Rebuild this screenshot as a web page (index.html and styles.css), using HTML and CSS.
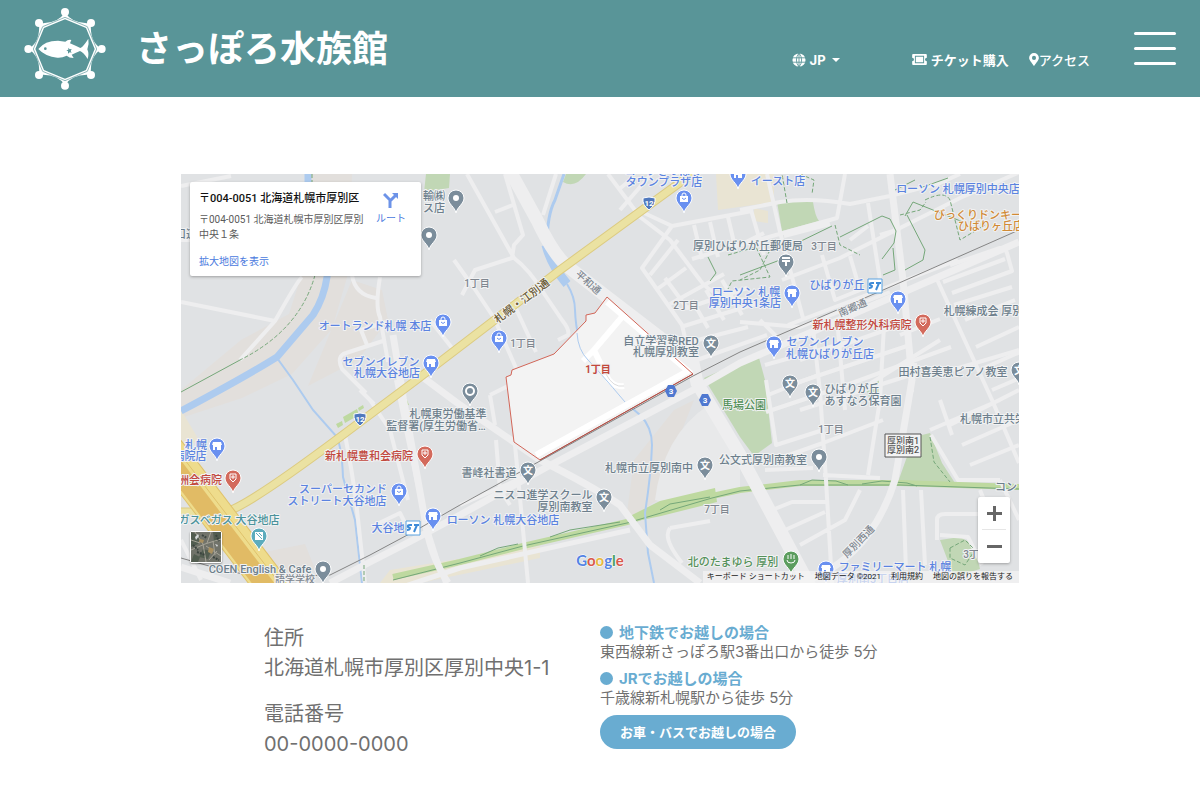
FILE: index.html
```html
<!DOCTYPE html>
<html lang="ja">
<head>
    <meta charset="UTF-8">
    <meta name="viewport" content="width=device-width, initial-scale=1.0">
    <title>アクセス | さっぽろ水族館</title>
    <link rel="stylesheet" href="styles.css">
</head>
<body>
    <header class="header">
        <a href="#" class="logo" aria-label="さっぽろ水族館">
            <svg viewBox="0 0 246 246" width="82" height="82">
                <path fill="#fff" fill-rule="evenodd" d="M123 13Q146 50 201 45Q196 100 232 123Q196 146 201 201Q146 196 123 232Q100 196 45 201Q50 146 14 123Q50 100 45 45Q100 50 123 13ZM123 34L60 60L34 123L60 186L123 212L186 186L212 123L186 60Z"/>
                <path fill="none" stroke="#599598" stroke-width="2" d="M123 28L56 56L28 123L56 190L123 218L190 190L218 123L190 56Z"/>
                <g fill="#fff">
                    <circle cx="123" cy="12" r="12"/><circle cx="201" cy="45" r="12"/>
                    <circle cx="233" cy="123" r="12"/><circle cx="201" cy="201" r="12"/>
                    <circle cx="123" cy="233" r="12"/><circle cx="45" cy="201" r="12"/>
                    <circle cx="13" cy="123" r="12"/><circle cx="45" cy="45" r="12"/>
                    <path d="M43 123Q62 98 102 98L124 101Q132 94 142 96L138 106Q154 113 169 120Q179 115 193 92Q196 110 190 124Q196 138 191 153Q178 132 168 129Q156 134 143 140L149 150Q135 150 128 143Q114 150 100 149Q64 146 43 123Z"/>
                </g>
                <circle cx="64" cy="122" r="4" fill="#599598"/>
                <path d="M133 119l4 5 6-1-3 6 3 5-6-1-5 4v-7l-5-3 6-2z" fill="#599598"/>
            </svg>
        </a>
        <h1 class="site-title">さっぽろ水族館</h1>
        <nav class="header-nav">
            <button type="button" class="lang">
                <svg viewBox="0 0 16 16" width="14" height="14">
                    <circle cx="8" cy="8" r="7.5" fill="#fff"/>
                    <path d="M0 5.5h16M0 10.5h16M8 0v16M8 0Q2 8 8 16M8 0q6 8 0 16" fill="none" stroke="#599598"/>
                </svg>
                JP
                <span class="caret"></span>
            </button>
            <a href="#" class="ticket">
                <svg viewBox="0 0 16 12" width="15" height="11">
                    <path fill="#fff" fill-rule="evenodd" d="M1 0h14q1 0 1 1v3q-2 0-2 2t2 2v3q0 1-1 1H1q-1 0-1-1V8q2 0 2-2T0 4V1q0-1 1-1zM3 2v8h10V2zM4 3h8v6H4z"/>
                </svg>
                チケット購入
            </a>
            <a href="#" class="access">
                <svg viewBox="0 0 12 16" width="10" height="13">
                    <path fill="#fff" fill-rule="evenodd" d="M6 16C5 14 0 9 0 6a6 6 0 0 1 12 0c0 3-5 8-6 10zM6 3.500a2.500 2.500 0 1 0 0 5 2.500 2.500 0 0 0 0-5z"/>
                </svg>
                アクセス
            </a>
        </nav>
        <button type="button" class="menu" aria-label="メニュー">
            <span></span><span></span><span></span>
        </button>
    </header>

    <main>
        <section class="map">
            <svg class="map-canvas" viewBox="181 174 838 409" preserveAspectRatio="xMidYMid slice">
                <defs>
                    <g id="pin"><path d="M0 15C-1 9-8 6-8 0a8 8 0 0 1 16 0c0 6-7 9-8 15z" stroke="#fff" stroke-width="1"/></g>
                    <g id="shop"><use href="#pin" fill="#6990f0"/><path fill="#fff" d="M-4-4h8l1 3h-1v5H0V1h-2v3h-2v-5h-1z"/></g>
                    <g id="bag"><use href="#pin" fill="#6990f0"/><path fill="#fff" d="M-4-2h8v6h-8z"/><path d="M-2-2v-1a2 2 0 0 1 4 0v1" fill="none" stroke="#fff"/><path d="M-2 0q2 3 4 0" fill="none" stroke="#6990f0"/></g>
                    <g id="dot"><use href="#pin" fill="#7b8d9b"/><circle r="3" fill="#fff"/></g>
                    <g id="ring"><use href="#pin" fill="#7b8d9b"/><circle r="4" fill="none" stroke="#fff" stroke-width="2"/></g>
                    <g id="school"><use href="#pin" fill="#7b8d9b"/><text class="pin-text" y="4">文</text></g>
                    <g id="hospital"><use href="#pin" fill="#d36a5c"/><path d="M-3-4h6v5l-3 3-3-3z" fill="none" stroke="#fff"/><path d="M0-3v4M-2-1h4" stroke="#fff"/></g>
                    <g id="station"><path fill="#fff" stroke="#5aa2e0" d="M-7-7H7V7H-7z"/><path d="M-1-3h-2q-3 0-2 2l2 1q0 2-3 2M1-3h5M4-3L1 4" fill="none" stroke="#3e8bd8" stroke-width="2"/></g>
                    <g id="route12"><path fill="#4f78bd" stroke="#fff" d="M-6-5Q0-7 6-5Q7 2 0 7Q-7 2-6-5Z"/><text class="route-text" y="3">12</text></g>
                    <g id="route3"><path fill="#4f78d0" d="M-3-6h6l3 6-3 6h-6l-3-6z"/><text class="route-text" y="3">3</text></g>
                </defs>
                <path fill="#e0e2e4" d="M0 0h1200v808H0z"/>

                <!-- ground -->
                <path fill="#e2dfdc" d="M305 174h47l-4 100-16 55-40 45-50 24-61 20v-28l60-50 48-26 16-50z"/>
                <path fill="#e2dfdc" d="M352 280l30 10 6 30-30 40-50 26zM626 520l8-60 40-50 20-10-24 60-12 40zM265 552l40-8 10 25-40 10z"/>
                <path fill="#e9e4d3" d="M716 174h58v28l-56 8zM390 570l150-24v12l-120 25h-40zM754 208l14 3v12l-14-2zM181 410l18 30-18 10z"/>
                <path fill="#e8e9ea" d="M655 500q8-64 52-94l33 40v46l-60 14z"/>

                <!-- parks -->
                <g fill="#c1d7b5">
                    <path d="M704 378l54-24 7 26 7 63-18 13-14-19zM777 202h36q2 14 6 19l-37 10zM898 482l16-45 16-4 12 30 13 20zM940 540l20-3 14 8 6 24-26 8zM426 174h24l-1 14-25 4zM563 182q12 7 23-8h-20zM865 386l14-7v17l-9 4z"/>
                </g>
                <path d="M181 590L300 586M393 577L460 562L523 546L627 522L655 512L712 496L740 490L800 483L900 483L1019 487" fill="none" stroke="#bed9a0" stroke-width="6"/>
                <path fill="#bed9a0" d="M630 516l30-15 55-13 2 14-56 14-29 6zM343 417l14-8 2 6-14 8zM336 424l6-3 1 4-5 3zM358 408l5-3 1 3-5 3zM405 395l4 10h-4z"/>
                <path d="M393 580L460 563L523 546L627 523L712 498L740 491L800 485L900 485L1019 489M480 556l18-8 20-4M550 537l20-7 50-8M660 510l10-6 40-7M800 485l12-5 24 1 12 4M862 484l20-3 25 2 10 3" fill="none" stroke="#75a779"/>

                <!-- rivers -->
                <g fill="none" stroke="#adcbef">
                    <path stroke-width="7" d="M308 174v30M330 240L327 277Q324 298 313 315L277 357Q245 377 181 411"/>
                    <path stroke-width="2" d="M277 358L293 380L313 410L337 437Q342 450 343 477L355 520L362 583"/>
                    <path stroke-width="3" d="M564 174L555 200Q547 215 547 245"/>
                    <path stroke-width="9" d="M546 245Q551 265 567 284"/>
                    <path stroke-width="2" d="M567 284Q575 297 575 310Q576 340 588 360Q602 381 625 402L640 415Q652 427 652 445Q651 475 645 513L648 553L654 583"/>
                </g>

                <!-- minor roads -->
                <g class="roads">
                    <path d="M181 302L275 321Q298 280 302 277M275 321L240 360M352 275q3 20 24 23M380 277q-5 30 0 40l8 45M367 345l-6-15 25-8M386 340l-40 13q-10 3-4 16l24 24M430 320l22 28M181 240h18M181 186l50-10"/>
                    <path d="M467 174L514 258Q530 270 545 295L562 320Q570 330 568 335L558 340M495 212l18-7M505 174L523 235L514 245L512 258L475 270L462 295M454 260l20 28 20 30 22 50M512 300l24 52M556 174L543 215"/>
                    <path d="M608 174L640 217L670 240L700 280Q712 298 750 300M618 190l15-12M620 210l40-46M642 212l30 14 80-15M672 226l-30 42 40 57 10 42M650 275l28-35M656 290l30-22M670 304l54-30M665 278l22 30 60-20M684 326l74-23M690 342l58-15M697 360l70-25M692 300l16 28M706 290l18 30M722 280l20 35M694 225l8 34M710 222l8 35M728 217l8 34M692 259l50-15M742 244l22-11"/>
                    <path d="M767 174L780 232L803 318M740 245L837 218L845 174M751 210l13 45M740 210L780 202Q810 197 850 204L890 196L940 183L960 174M784 236L830 224M782 280l58-22 120-60 60-26M788 325l170-65M822 255l13 45 25-10-10-34M850 240l18-14M868 203L880 280M880 235l20-6M740 322l60 5 90-35M780 340l-20-20"/>
                    <path d="M935 275L992 400L1019 463M950 265l50-17q5 0 7 5l5 18-60 22M943 282l62-23M954 305l58-18M965 320l50-20M976 347l43-20M984 368l36-16M992 390l28-12M905 310L912 392M860 390l80-50M900 335l40-16M800 360l100-35M790 385l120-40M800 410l120-38M905 365h12M765 365l90-25"/>
                    <path d="M813 328L820 392L826 480L832 583M838 330l7 80M884 325L880 400L868 475M766 380l10 65 47-15M766 412l75-25 110-40M768 395l50-20M775 460l48-17 60-23M765 470l48-2M823 475L880 478M772 510l20-8h35M785 530l40-18M800 545l45-25 15-30M903 490l3 80M921 490l4 75M937 540v-20q0-6 8-6h40M940 535l28 2 14 28M940 400l12 35M931 435L958 480H1000M935 375L1019 350M950 425L1019 390M962 445L1019 420M970 465l49-20M930 430L1000 400M1000 480l19 40M980 490l20 50"/>
                    <path d="M181 540l20 40M345 435Q353 475 357 510L365 583M396 380L405 425L425 520L445 583M370 400l20 30 18 70M360 390l14 14M375 525l25-12 10 20M496 440l4 50 10 15M515 445L528 583M490 395l24-12M490 395l5 30M460 405L540 460M460 505L540 470M670 528l40-7M670 528q-8 10 12 35"/>
                    <path stroke-width="5" d="M393 590L460 568L630 530"/>
                </g>
                <g class="roads main-roads">
                    <path d="M181 567L230 583M330 583L370 562L413 540L460 515L545 468L693 390L740 363L890 298L1019 242"/>
                    <path d="M400 380L425 520Q430 555 448 583M393 335l10 60M413 370l47 35L540 460Q590 485 620 505L650 545L700 583"/>
                    <path d="M890 174L903 280L912 380L895 480Q870 560 800 583"/>
                </g>
                <path d="M504 160L537 220Q553 254 567 266L607 297L693 363L697 383L740 455L812 590" fill="none" stroke="#eeeeef" stroke-width="13"/>

                <!-- walking paths -->
                <g fill="none" stroke="#75a779">
                    <path d="M181 392L240 360M708 257l8 16-6 8M795 244l37-18M840 237l42-21 8 3 6 12-2 12-12 16M895 190l20-10M883 275l12-5-2-22M905 270l18-10 2-10-18-35M920 188l28-10M740 275l40-15M905 216l8-14 50 20"/>
                    <path stroke-dasharray="4 2" d="M312 174v60M315 275Q300 330 240 360M787 203l-5-29M800 174l14 6-2 14M835 225l5 20 20 10M925 200q20-10 25 0l10 40 25-15M728 255l28-8 14 30-38 4-4 8M770 250l-10 20-20 10M900 215l20-5 6-8M930 437l4 25 16 20M950 548l15-8 10 10-10 15-15-7zM364 565v18"/>
                </g>

                <!-- district outline -->
                <path fill="#f3f3f3" d="M607 297L693 374L540 460L514 442L506 377L511 375L512 370L554 354L586 321L586 315L595 313Z"/>
                <path d="M607 302L688 371L536 455M622 317L594 350L606 375Q612 388 624 386M594 350l-11 11" fill="none" stroke="#fff" stroke-width="6"/>
                <path d="M606 374Q613 388 624 386" fill="none" stroke="#ddd"/>
                <path d="M577 333Q578 350 588 360T625 402" fill="none" stroke="#adcbef"/>
                <path fill="none" stroke="#d26658" d="M607 297L693 374L540 460L514 442L506 377L511 375L512 370L554 354L586 321L586 315L595 313Z"/>

                <!-- railway -->
                <path d="M181 558L230 572L270 577L330 575L370 555L413 532L460 505L540 461L693 376L740 352L890 287L1019 230" fill="none" stroke="#858585"/>
                <path d="M540 460L693 374" stroke="#ad5048"/>

                <!-- highways -->
                <path d="M181 512L225 512Q245 508 340 437L415 381L560 270L700 168" fill="none" stroke="#dccb82" stroke-width="9"/>
                <path d="M181 512L225 512Q245 508 340 437L415 381L560 270L700 168" fill="none" stroke="#ebe2a2" stroke-width="7"/>
                <path d="M160 440L282 600" stroke="#dfc26c" stroke-width="34"/>
                <path d="M160 440L282 600" stroke="#eedc8c" stroke-width="32"/>
                <path d="M154 440L276 600" stroke="#e1bb65" stroke-width="18"/>
                <path d="M175 447L286 592" stroke="#dfc26c"/>

                <use href="#route12" x="649" y="203"/><use href="#route12" x="360" y="419"/>
                <use href="#route3" x="671" y="391"/><use href="#route3" x="705" y="400"/>
                <use href="#bag" x="684" y="198"/><use href="#bag" x="499" y="338"/>
                <use href="#bag" x="443" y="322"/><use href="#bag" x="399" y="491"/>
                <use href="#shop" x="738" y="174"/><use href="#shop" x="431" y="363"/>
                <use href="#shop" x="792" y="293"/><use href="#shop" x="898" y="299"/>
                <use href="#shop" x="774" y="344"/><use href="#shop" x="217" y="446"/>
                <use href="#shop" x="433" y="516"/><use href="#shop" x="826" y="569"/>
                <use href="#dot" x="456" y="198"/><use href="#dot" x="429" y="235"/>
                <use href="#dot" x="819" y="457"/><use href="#dot" x="323" y="569"/>
                <use href="#ring" x="470" y="391"/>
                <use href="#school" x="711" y="343"/><use href="#school" x="790" y="383"/>
                <use href="#school" x="813" y="392"/><use href="#school" x="528" y="470"/>
                <use href="#school" x="604" y="497"/><use href="#school" x="705" y="465"/>
                <use href="#school" x="1019" y="370"/>
                <use href="#hospital" x="923" y="322"/><use href="#hospital" x="425" y="454"/>
                <use href="#hospital" x="233" y="478"/>
                <g transform="translate(786 262)"><use href="#pin" fill="#7b8d9b"/><path d="M-4-4h8M-4-1h8M0-1v5" fill="none" stroke="#fff" stroke-width="2"/></g>
                <g transform="translate(791 559)"><use href="#pin" fill="#5c9d5e"/><path d="M-3-4v4M0-5v5M3-4v4M-4 1q0 3 4 3t4-3" fill="none" stroke="#fff"/></g>
                <g transform="translate(259 536)"><use href="#pin" fill="#5cacbd"/><path d="M-4-4h8v8h-8z" fill="#fff"/><path d="M-3-3l6 6M0-3l3 3" stroke="#5cacbd"/></g>
                <use href="#station" x="875" y="286"/><use href="#station" x="413" y="528"/>

                <!-- shops -->
                <g class="label blue">
                    <text x="663" y="175">コープさっぽろ</text><text x="664" y="186">タウンプラザ店</text>
                    <text x="778" y="185">イースト店</text>
                    <text x="958" y="193">ローソン 札幌厚別中央店</text>
                    <text x="837" y="289">ひばりが丘</text>
                    <text x="746" y="296">ローソン 札幌</text><text x="745" y="307">厚別中央1条店</text>
                    <text x="825" y="346">セブンイレブン</text><text x="830" y="358">札幌ひばりが丘店</text>
                    <text x="375" y="330">オートランド札幌 本店</text>
                    <text x="381" y="366">セブンイレブン</text><text x="387" y="377">札幌大谷地店</text>
                    <text x="196" y="449">札幌</text><text x="190" y="460">病院店</text>
                    <text x="343" y="493">スーパーセカンド</text><text x="337" y="505">ストリート大谷地店</text>
                    <text x="388" y="532">大谷地</text>
                    <text x="503" y="524">ローソン 札幌大谷地店</text>
                    <text x="895" y="571">ファミリーマート 札幌</text><text x="873" y="583">厚別南5丁目店</text>
                </g>
                <!-- schools and offices -->
                <g class="label grey">
                    <text x="434" y="200">輸㈱</text><text x="434" y="212">ス店</text>
                    <text x="748" y="250">厚別ひばりが丘郵便局</text>
                    <text x="661" y="345">自立学習塾RED</text><text x="666" y="356">札幌厚別教室</text>
                    <text x="448" y="418">札幌東労働基準</text><text x="436" y="430">監督署(厚生労働省…</text>
                    <text x="489" y="477">書峰社書道</text>
                    <text x="649" y="472">札幌市立厚別南中</text>
                    <text x="763" y="464">公文式厚別南教室</text>
                    <text x="543" y="499">ニスコ進学スクール</text><text x="565" y="511">厚別南教室</text>
                    <text x="852" y="393">ひばりが丘</text><text x="863" y="405">あすなろ保育園</text>
                    <text x="953" y="376">田村喜美恵ピアノ教室</text>
                    <text x="989" y="315">札幌練成会 厚別南</text>
                    <text x="993" y="423">札幌市立共栄</text><text x="1006" y="491">コン</text>
                    <text x="260" y="573">COEN English &amp; Cafe</text>
                    <text x="186" y="238">口道</text>
                </g>
                <g class="label red">
                    <text x="862" y="329">新札幌整形外科病院</text>
                    <text x="369" y="460">新札幌豊和会病院</text><text x="200" y="484">洲会病院</text>
                    <text x="598" y="373" class="district">1丁目</text>
                </g>
                <g class="label orange">
                    <text x="978" y="219">びっくりドンキー</text><text x="991" y="230">ひばりヶ丘店</text>
                </g>
                <g class="label green">
                    <text x="744" y="409">馬場公園</text><text x="733" y="566">北のたまゆら 厚別</text>
                </g>
                <g class="label teal"><text x="229" y="524">ガスベガス 大谷地店</text></g>
                <g class="label small">
                    <text x="477" y="287">1丁目</text><text x="523" y="347">1丁目</text>
                    <text x="686" y="309">2丁目</text><text x="824" y="250">3丁目</text>
                    <text x="831" y="433">1丁目</text><text x="717" y="513">7丁目</text>
                    <text x="976" y="558">3丁目</text><text x="295" y="583">語学学校</text>
                    <text transform="translate(586 285) rotate(42)">平和通</text>
                    <text transform="translate(854 311) rotate(-24)">南郷通</text>
                    <text transform="translate(861 544) rotate(-46)">厚別西通</text>
                </g>
                <g class="label brown"><text transform="translate(524 304) rotate(-37)">札幌・江別通</text></g>
                <path fill="#f5f5f5" stroke="#555" d="M885 434h36v23h-36z"/>
                <g class="label sign"><text x="903" y="444">厚別南1</text><text x="903" y="453">厚別南2</text></g>
                <text x="600" y="566" class="google"><tspan fill="#5484e4">G</tspan><tspan fill="#d9594c">o</tspan><tspan fill="#e7b93e">o</tspan><tspan fill="#5484e4">g</tspan><tspan fill="#4aa163">l</tspan><tspan fill="#d9594c">e</tspan></text>
            </svg>

            <div class="place-card">
                <div class="place-text">
                    <h2>〒004-0051 北海道札幌市厚別区</h2>
                    <p>〒004-0051 北海道札幌市厚別区厚別中央１条</p>
                    <a href="#">拡大地図を表示</a>
                </div>
                <a href="#" class="directions">
                    <svg viewBox="0 0 16 16" width="16" height="16">
                        <path d="M1 2l6 6v8M7 9l6-6" fill="none" stroke="#6d93e8" stroke-width="3"/>
                        <path d="M9 1h6v6z" fill="#6d93e8"/>
                    </svg>
                    ルート
                </a>
            </div>

            <button type="button" class="satellite" aria-label="航空写真">
                <svg viewBox="0 0 30 30" width="30" height="30">
                    <path fill="#71736a" d="M0 0h30v30H0z"/>
                    <path fill="#525d50" d="M0 0l9 4-2 8-7 3zM12 17l8 2-3 8-9-2zM22 0h8v7l-7 3zM3 22l6 3-2 5H0z"/>
                    <path d="M4 0l8 12 3 18M0 18l14-6 16-5M15 14l15 10M20 0l-4 11M0 8l9 3M18 28l8-9M22 9l2 14" fill="none" stroke="#a6a397"/>
                    <path fill="#a9905f" d="M18 15l5 2-2 5-4-2zM9 7l4 1-1 3-4-1z"/>
                    <path fill="#d7dadb" d="M4 5l3-3 1 2-3 4zM24 12l3 1-1 2z"/>
                    <path d="M2 13l5 5M11 3l5 3M22 25l6 3M6 20l8 3M25 3l3 6" stroke="#3b443f" stroke-width="2" stroke-dasharray="2 1"/>
                </svg>
            </button>

            <div class="zoom">
                <button type="button" class="zoom-in" aria-label="拡大"></button>
                <button type="button" class="zoom-out" aria-label="縮小"></button>
            </div>

            <div class="map-footer">
                <button type="button">キーボード ショートカット</button>
                <span>地図データ ©2021</span>
                <a href="#">利用規約</a>
                <a href="#">地図の誤りを報告する</a>
            </div>
        </section>

        <section class="info">
            <div class="address">
                <p>住所<br>北海道札幌市厚別区厚別中央1-1</p>
                <p>電話番号<br>00-0000-0000</p>
            </div>
            <div class="route">
                <h3>地下鉄でお越しの場合</h3>
                <p>東西線新さっぽろ駅3番出口から徒歩 5分</p>
                <h3>JRでお越しの場合</h3>
                <p>千歳線新札幌駅から徒歩 5分</p>
                <a href="#" class="car-button">お車・バスでお越しの場合</a>
            </div>
        </section>
    </main>
</body>
</html>
```

FILE: styles.css
```css
* {
    box-sizing: border-box;
}
body {
    margin: 0;
    font-family: Inter, "Noto Sans CJK JP", sans-serif;
    color: #707070;
    background-color: #fff;
}
a {
    text-decoration: none;
}
button {
    font-family: inherit;
    padding: 0;
    border: none;
    background: none;
    cursor: pointer;
}
svg {
    display: block;
}

/* header */
.header {
    display: flex;
    align-items: center;
    height: 97px;
    padding: 0 24px;
    background-color: #599598;
    color: #fff;
}
.site-title {
    margin: 0 0 0 30px;
    font-size: 36px;
    line-height: 48px;
}
.header-nav {
    display: flex;
    align-items: center;
    margin: 22px 44px 0 auto;
    font-size: 13px;
    line-height: 20px;
}
.header-nav a, .lang {
    display: flex;
    align-items: center;
    color: #fff;
    font-size: 13px;
}
.lang {
    gap: 4px;
    margin-right: 72px;
    font-weight: bold;
}
.caret {
    margin-left: 2px;
    border: 4px solid transparent;
    border-top-color: #fff;
    border-bottom: none;
}
.ticket {
    gap: 4px;
    margin-right: 20px;
    font-weight: bold;
}
.access {
    font-weight: 500;
}
.menu {
    display: flex;
    flex-direction: column;
    gap: 12px;
    width: 42px;
}
.menu span {
    height: 3px;
    border-radius: 2px;
    background-color: #fff;
}

/* map */
.map {
    position: relative;
    width: calc(70% - 2px);
    height: 409px;
    margin: 77px auto 0;
    overflow: hidden;
    font-family: Roboto, "Noto Sans CJK JP", sans-serif;
}
.map-canvas {
    width: 100%;
    height: 100%;
}
.roads {
    fill: none;
    stroke: #eeeeef;
    stroke-width: 4px;
    stroke-linejoin: round;
}
.main-roads {
    stroke-width: 7px;
}
.label {
    font-size: 11px;
    font-weight: 500;
    text-anchor: middle;
    paint-order: stroke;
    stroke: #f1f2f3;
    stroke-width: 2px;
    stroke-linejoin: round;
}
.blue { fill: #5b83e0; }
.grey { fill: #6d7f8c; }
.red { fill: #c2483d; }
.orange { fill: #d18a35; }
.green { fill: #55915a; }
.teal { fill: #4b929b; }
.small { fill: #808790; font-size: 10px; }
.brown { fill: #6b5a33; }
.sign { fill: #555; font-size: 9px; }
.district { font-weight: bold; font-size: 10px; }
.pin-text, .route-text {
    fill: #fff;
    font-size: 10px;
    font-weight: bold;
    text-anchor: middle;
}
.route-text {
    font-size: 8px;
}
.google {
    font-family: Lato, sans-serif;
    font-size: 15px;
    font-weight: bold;
    text-anchor: middle;
    paint-order: stroke;
    stroke: #fff;
    stroke-width: 1px;
}
.place-card {
    position: absolute;
    top: 8px;
    left: 9px;
    display: flex;
    justify-content: space-between;
    width: 231px;
    padding: 9px 15px 7px 9px;
    border-radius: 2px;
    background-color: #fff;
    box-shadow: 0 1px 3px rgba(0, 0, 0, 0.3);
    font-size: 10px;
    line-height: 15px;
}
.place-text {
    width: 165px;
}
.place-card h2 {
    margin: 0 0 6px;
    overflow: hidden;
    white-space: nowrap;
    text-overflow: ellipsis;
    font-size: 11px;
    font-weight: 500;
    color: #111;
}
.place-card p {
    margin: 0 0 12px;
    color: #5b5b5b;
}
.place-card a {
    color: #4a7ade;
}
.directions {
    display: flex;
    flex-direction: column;
    align-items: center;
    gap: 3px;
    padding-top: 1px;
}
.satellite {
    position: absolute;
    bottom: 20px;
    left: 9px;
    border: 1px solid #fff;
    border-radius: 2px;
    box-shadow: 0 1px 2px rgba(0, 0, 0, 0.4);
}
.zoom {
    position: absolute;
    right: 9px;
    bottom: 20px;
    width: 32px;
    padding: 0 4px;
    border-radius: 2px;
    background-color: #fff;
    box-shadow: 0 1px 3px rgba(0, 0, 0, 0.3);
}
.zoom button {
    display: block;
    width: 24px;
    height: 33px;
    background: linear-gradient(#666, #666) center / 15px 3px no-repeat;
}
.zoom .zoom-in {
    border-bottom: 1px solid #e6e6e6;
    background: linear-gradient(#666, #666) center / 15px 3px no-repeat, linear-gradient(#666, #666) center / 3px 15px no-repeat;
}
.map-footer {
    position: absolute;
    right: 0;
    bottom: 0;
    display: flex;
    gap: 10px;
    padding: 0 6px 0 4px;
    background-color: rgba(245, 245, 245, 0.7);
    font-size: 8px;
    line-height: 12px;
    color: #222;
}
.map-footer a, .map-footer button {
    color: #222;
    font-size: 8px;
    line-height: 12px;
}

/* address and directions */
.info {
    display: grid;
    grid-template-columns: 1fr 1fr;
    width: 56%;
    margin: 40px auto 60px;
}
.address {
    font-size: 20px;
    line-height: 30px;
}
.address p {
    margin: 0 0 16px;
}
.route {
    font-size: 15px;
    line-height: 19px;
}
.route h3 {
    display: flex;
    align-items: center;
    gap: 6px;
    margin: 0;
    font-size: 15px;
    color: #69acd1;
}
.route h3::before {
    content: "";
    width: 13px;
    height: 13px;
    border-radius: 50%;
    background-color: #69acd1;
}
.route p {
    margin: 0 0 8px;
}
.car-button {
    display: inline-block;
    padding: 0 20px;
    border-radius: 17px;
    background-color: #69acd1;
    color: #fff;
    font-size: 13px;
    font-weight: bold;
    line-height: 34px;
}
```
